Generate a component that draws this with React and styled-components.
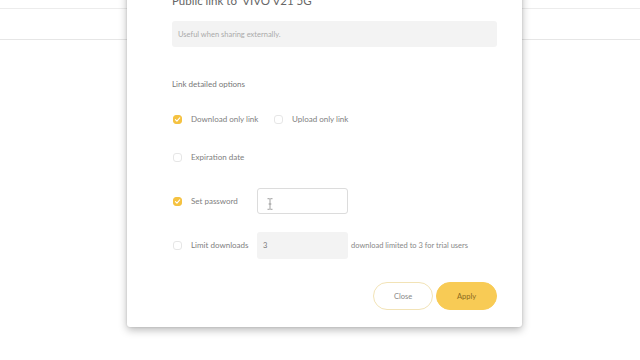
import styled, { createGlobalStyle } from "styled-components";

const GlobalStyle = createGlobalStyle`
  html, body {
    margin: 0;
    padding: 0;
    background: #ffffff;
    font-family: Lato, "Open Sans", "Liberation Sans", sans-serif;
    overflow: hidden;
  }
`;

const Page = styled.div`
  position: relative;
  width: 640px;
  height: 360px;
  overflow: hidden;
  background: #fff;
`;

const HeaderBar = styled.div`
  margin-top: 8px;
  height: 30px;
  border-top: 1px solid #ececec;
  border-bottom: 1px solid #e6e6e6;
`;

const Modal = styled.div`
  position: absolute;
  left: 127px;
  top: -42px;
  width: 395px;
  height: 369px;
  box-sizing: border-box;
  background: #fff;
  border-radius: 3px;
  box-shadow: 0 3px 8px rgba(0, 0, 0, 0.28), 0 0 2px rgba(0, 0, 0, 0.15);
  padding: 36px 25px 0 45px;
  display: flex;
  flex-direction: column;
`;

const Title = styled.h2`
  margin: 0;
  font-size: 11.5px;
  font-weight: 400;
  color: #666;
  line-height: 14px;
`;

const TextField = styled.div`
  margin-top: 13px;
  height: 26px;
  background: ${(p) => (p.$disabled ? "#f3f3f3" : "#fff")};
  border: 1px solid ${(p) => (p.$outlined ? "#dcdcdc" : "transparent")};
  border-radius: 3px;
  box-sizing: border-box;
  display: flex;
  align-items: center;
  padding-left: 5px;
  font-size: 7.5px;
  color: ${(p) => (p.$value ? "#777" : "#aaa")};
`;

const SectionLabel = styled.div`
  margin-top: 32px;
  font-size: 8px;
  color: #777;
  line-height: 10px;
`;

const OptionRow = styled.div`
  display: flex;
  align-items: center;
  height: 26px;
  margin-top: ${(p) => p.$gap}px;
`;

const Option = styled.div`
  display: flex;
  align-items: center;
  width: ${(p) => p.$width || "auto"};
  flex-shrink: 0;
`;

const Box = styled.span`
  width: 9px;
  height: 9px;
  margin-left: 1px;
  border-radius: 3px;
  box-sizing: border-box;
  border: 1px solid ${(p) => (p.$checked ? "#f5c241" : "#e6e6e6")};
  background: ${(p) => (p.$checked ? "#f5c241" : "#fff")};
  display: flex;
  align-items: center;
  justify-content: center;
`;

const OptionLabel = styled.span`
  margin-left: 9px;
  font-size: 8px;
  color: #808080;
  white-space: nowrap;
`;

const FieldCol = styled.div`
  width: 91px;
`;

const Hint = styled.span`
  margin-left: 3px;
  font-size: 7.5px;
  color: #888;
  white-space: nowrap;
`;

const Footer = styled.div`
  margin-top: 24px;
  display: flex;
  justify-content: flex-end;
  gap: 3px;
`;

const Button = styled.button`
  width: ${(p) => p.$w}px;
  height: 28px;
  border-radius: 14px;
  font-family: inherit;
  font-size: 7.5px;
  cursor: pointer;
  border: 1px solid ${(p) => (p.$primary ? "#f8cb55" : "#f2e3b6")};
  background: ${(p) => (p.$primary ? "#f8cb55" : "#fff")};
  color: ${(p) => (p.$primary ? "#8a6a20" : "#888")};
`;

const CursorMark = styled.svg`
  margin-left: 4px;
  margin-top: 6px;
`;

const Check = () => (
  <svg width="7" height="7" viewBox="0 0 10 10">
    <path d="M2 5.2 L4.2 7.3 L8.2 2.8" fill="none" stroke="#fff" strokeWidth="1.6" strokeLinecap="round" strokeLinejoin="round" />
  </svg>
);

const IBeam = () => (
  <CursorMark width="6" height="12" viewBox="0 0 6 12">
    <path d="M0.5 0.7 H2.3 L3 1.3 L3.7 0.7 H5.5 M3 1.3 V10.7 M0.5 11.3 H2.3 L3 10.7 L3.7 11.3 H5.5 M1.6 6 H4.4" fill="none" stroke="#888" strokeWidth="0.8" />
  </CursorMark>
);

const CheckItem = ({ checked, label, width }) => (
  <Option $width={width}>
    <Box $checked={checked}>{checked && <Check />}</Box>
    <OptionLabel>{label}</OptionLabel>
  </Option>
);

export default function App() {
  return (
    <Page>
      <GlobalStyle />
      <HeaderBar />
      <Modal>
        <Title>Public link to 'VIVO V21 5G'</Title>
        <TextField $disabled>Useful when sharing externally.</TextField>
        <SectionLabel>Link detailed options</SectionLabel>

        <OptionRow $gap={17}>
          <CheckItem checked label="Download only link" width="101px" />
          <CheckItem label="Upload only link" />
        </OptionRow>

        <OptionRow $gap={12}>
          <CheckItem label="Expiration date" />
        </OptionRow>

        <OptionRow $gap={18}>
          <CheckItem checked label="Set password" width="85px" />
          <FieldCol>
            <TextField $outlined style={{ marginTop: 0 }}>
              <IBeam />
            </TextField>
          </FieldCol>
        </OptionRow>

        <OptionRow $gap={18}>
          <CheckItem label="Limit downloads" width="85px" />
          <FieldCol>
            <TextField $disabled $value style={{ marginTop: 0, height: 27 }}>
              3
            </TextField>
          </FieldCol>
          <Hint>download limited to 3 for trial users</Hint>
        </OptionRow>

        <Footer>
          <Button $w={60}>Close</Button>
          <Button $primary $w={61}>Apply</Button>
        </Footer>
      </Modal>
    </Page>
  );
}
